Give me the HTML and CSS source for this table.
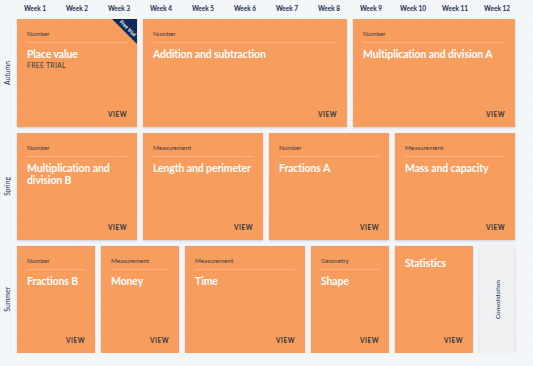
FILE: index.html
```html
<!DOCTYPE html>
<html lang="en">

<head>
  <meta charset="UTF-8">
  <title>Year 3 scheme of learning</title>
  <link rel="stylesheet" href="styles.css">
</head>

<body>
  <div class="planner">
    <!--周次表头-->
    <div class="corner"></div>
    <div class="week">Week 1</div>
    <div class="week">Week 2</div>
    <div class="week">Week 3</div>
    <div class="week">Week 4</div>
    <div class="week">Week 5</div>
    <div class="week">Week 6</div>
    <div class="week">Week 7</div>
    <div class="week">Week 8</div>
    <div class="week">Week 9</div>
    <div class="week">Week 10</div>
    <div class="week">Week 11</div>
    <div class="week">Week 12</div>

    <!--秋季-->
    <div class="season"><span>Autumn</span></div>
    <a class="unit span-3" href="#">
      <div class="ribbon"><span>Free trial</span></div>
      <div class="unit-cat">Number</div>
      <div class="unit-title">Place value</div>
      <div class="unit-sub">FREE TRIAL</div>
      <div class="unit-view">VIEW</div>
    </a>
    <a class="unit span-5" href="#">
      <div class="unit-cat">Number</div>
      <div class="unit-title">Addition and subtraction</div>
      <div class="unit-view">VIEW</div>
    </a>
    <a class="unit span-4" href="#">
      <div class="unit-cat">Number</div>
      <div class="unit-title">Multiplication and division A</div>
      <div class="unit-view">VIEW</div>
    </a>

    <!--春季-->
    <div class="season"><span>Spring</span></div>
    <a class="unit span-3" href="#">
      <div class="unit-cat">Number</div>
      <div class="unit-title">Multiplication and division B</div>
      <div class="unit-view">VIEW</div>
    </a>
    <a class="unit span-3" href="#">
      <div class="unit-cat">Measurement</div>
      <div class="unit-title">Length and perimeter</div>
      <div class="unit-view">VIEW</div>
    </a>
    <a class="unit span-3" href="#">
      <div class="unit-cat">Number</div>
      <div class="unit-title">Fractions A</div>
      <div class="unit-view">VIEW</div>
    </a>
    <a class="unit span-3" href="#">
      <div class="unit-cat">Measurement</div>
      <div class="unit-title">Mass and capacity</div>
      <div class="unit-view">VIEW</div>
    </a>

    <!--夏季-->
    <div class="season"><span>Summer</span></div>
    <a class="unit span-2" href="#">
      <div class="unit-cat">Number</div>
      <div class="unit-title">Fractions B</div>
      <div class="unit-view">VIEW</div>
    </a>
    <a class="unit span-2" href="#">
      <div class="unit-cat">Measurement</div>
      <div class="unit-title">Money</div>
      <div class="unit-view">VIEW</div>
    </a>
    <a class="unit span-3" href="#">
      <div class="unit-cat">Measurement</div>
      <div class="unit-title">Time</div>
      <div class="unit-view">VIEW</div>
    </a>
    <a class="unit span-2" href="#">
      <div class="unit-cat">Geometry</div>
      <div class="unit-title">Shape</div>
      <div class="unit-view">VIEW</div>
    </a>
    <a class="unit span-2" href="#">
      <div class="unit-title">Statistics</div>
      <div class="unit-view">VIEW</div>
    </a>
    <div class="consolidation span-1"><span>Consolidation</span></div>
  </div>
</body>

</html>
```

FILE: styles.css
```css
* {
  margin: 0;
  padding: 0;
  box-sizing: border-box;
}

body {
  background-color: #f4f7fa;
  background-image:
    linear-gradient(rgba(40, 70, 110, .012) 1px, transparent 1px),
    linear-gradient(90deg, rgba(40, 70, 110, .012) 1px, transparent 1px);
  background-size: 5px 5px;
  font-family: Lato, "Liberation Sans", sans-serif;
  color: #1d2d50;
}

a {
  text-decoration: none;
}

.planner {
  display: grid;
  grid-template-columns: 11px repeat(12, 36px);
  grid-template-rows: 13px 108px 107px 107px;
  gap: 6px;
}

.week {
  font-size: 6.5px;
  font-weight: 700;
  line-height: 13px;
  text-align: center;
  white-space: nowrap;
  padding-top: 2px;
}

.season {
  display: flex;
  align-items: center;
  justify-content: center;
  padding-left: 3px;
}

.season span {
  writing-mode: vertical-rl;
  transform: rotate(180deg);
  font-size: 6.8px;
  white-space: nowrap;
}

.span-1 { grid-column: span 1; }
.span-2 { grid-column: span 2; }
.span-3 { grid-column: span 3; }
.span-4 { grid-column: span 4; }
.span-5 { grid-column: span 5; }

.unit {
  position: relative;
  display: flex;
  flex-direction: column;
  padding: 11px 10px 8px;
  background-color: #f79e5f;
  box-shadow: 0 1px 2px rgba(30, 40, 60, .18);
  overflow: hidden;
}

.unit-cat {
  font-size: 6.3px;
  line-height: 8px;
  color: #3b3a40;
  padding-bottom: 4px;
  border-bottom: 1px solid rgba(255, 255, 255, .25);
}

.unit-title {
  margin-top: 5px;
  font-size: 10.5px;
  line-height: 12px;
  font-weight: 700;
  letter-spacing: -.12px;
  color: #fff;
}

.unit > .unit-title:first-child {
  margin-top: 0;
}

.unit-sub {
  margin-top: 1px;
  font-size: 7px;
  line-height: 8px;
  color: #3b3a40;
  letter-spacing: .2px;
}

.unit-view {
  margin-top: auto;
  align-self: flex-end;
  font-size: 6.5px;
  line-height: 8px;
  font-weight: 700;
  letter-spacing: .5px;
  color: #33343c;
}

/* 右上角的试用角标 */
.ribbon {
  position: absolute;
  top: 0;
  right: 0;
  width: 25px;
  height: 25px;
  background-color: #0d2a5a;
  clip-path: polygon(0 0, 100% 0, 100% 100%);
}

.ribbon span {
  position: absolute;
  top: 6px;
  right: -4px;
  width: 26px;
  font-size: 5.2px;
  line-height: 6px;
  font-weight: 700;
  color: #fff;
  text-align: center;
  white-space: nowrap;
  transform: rotate(45deg);
}

.consolidation {
  display: flex;
  align-items: center;
  justify-content: center;
  background-color: #eef0f2;
  box-shadow: 0 1px 2px rgba(30, 40, 60, .18);
}

.consolidation span {
  writing-mode: vertical-rl;
  transform: rotate(180deg);
  font-size: 6.5px;
  white-space: nowrap;
}
```
